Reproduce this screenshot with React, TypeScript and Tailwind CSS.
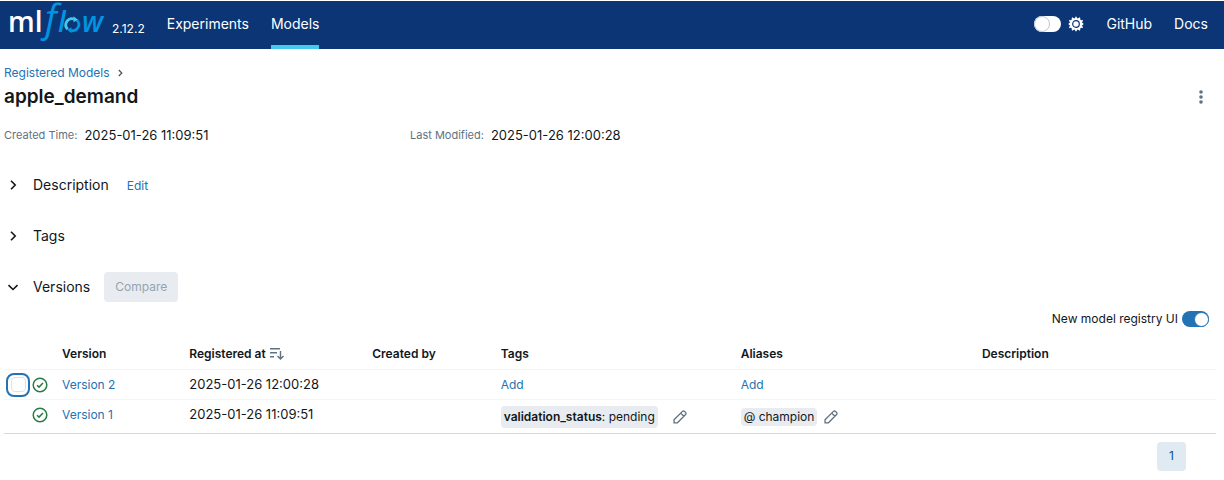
import { useState } from "react";
import type { ReactNode } from "react";

const linkClass = "text-[#2272b4] hover:underline";

function Logo() {
  return (
    <svg width="99" height="48" viewBox="0 0 99 48" role="img" aria-label="mlflow" className="shrink-0 overflow-visible">
      <text x="-1" y="31" fill="#fff" fontFamily="'Open Sans', sans-serif" fontSize="28" fontWeight="600">ml</text>
      <text x="36" y="31" fill="#0194e2" fontFamily="'Open Sans', sans-serif" fontSize="38" fontStyle="italic" fontWeight="500">f</text>
      <text x="49" y="31" fill="#0194e2" fontFamily="'Open Sans', sans-serif" fontSize="28" fontStyle="italic" fontWeight="600">l</text>
      <g fill="none" strokeWidth="2.800">
        <path d="M58.600 28.200A6.200 6.200 0 0 1 65 18" stroke="#43c9ed" />
        <path d="M68 19.200A6.200 6.200 0 0 1 62 29.500" stroke="#0194e2" />
      </g>
      <path d="M64.500 15.200v6l4.500-2.500z" fill="#43c9ed" />
      <path d="M62.500 32.200v-6l-4.500 2.500z" fill="#0194e2" />
      <text x="73" y="31" fill="#0194e2" fontFamily="'Open Sans', sans-serif" fontSize="28" fontStyle="italic" fontWeight="600">w</text>
    </svg>
  );
}

function Gear() {
  return (
    <svg width="16" height="16" viewBox="0 0 16 16" aria-hidden="true">
      <path
        d="M8 .3 9.500 2.600 12 1.300 12.500 3.900 15.200 4.200 14 6.500 15.800 8 14 9.500 15.200 11.800 12.500 12.100 12 14.700 9.500 13.400 8 15.700 6.500 13.400 4 14.700 3.500 12.100.8 11.800 2 9.500.2 8 2 6.500.8 4.200 3.500 3.900 4 1.300 6.500 2.600z"
        fill="#fff"
      />
      <circle cx="8" cy="8" r="3.300" fill="none" stroke="#0b3574" strokeWidth="1.200" />
    </svg>
  );
}

function Chevron({ open }: { open: boolean }) {
  return (
    <svg width="16" height="16" viewBox="0 0 16 16" fill="none" stroke="#11171c" strokeWidth="1.600" aria-hidden="true">
      <path d={open ? "M3.500 6.200 8 10.500 12.500 6.200" : "M6 3.800 10.200 8 6 12.200"} />
    </svg>
  );
}

function Pencil() {
  return (
    <svg width="14" height="14" viewBox="0 0 16 16" fill="none" stroke="#5f7281" strokeWidth="1.500" strokeLinejoin="round" aria-hidden="true">
      <path d="M1.200 14.800v-3.600l9.600-9.600a1.600 1.600 0 0 1 2.300 0l1.300 1.300a1.600 1.600 0 0 1 0 2.300L4.800 14.800zM8.800 3.600l3.600 3.600" />
    </svg>
  );
}

function Ready() {
  return (
    <svg width="16" height="16" viewBox="0 0 16 16" fill="none" stroke="#277c43" strokeWidth="1.500" role="img" aria-label="Ready">
      <circle cx="8" cy="8" r="6.800" />
      <path d="M5 8.200 7 10.100 11 6" />
    </svg>
  );
}

function SortIcon() {
  return (
    <svg width="14" height="14" viewBox="0 0 14 14" fill="none" stroke="#5f7281" strokeWidth="1.400" aria-hidden="true">
      <path d="M0 1.700h10M0 5.700h7M0 9.700h4M10.500 4v8M7.500 9l3 3 3-3" />
    </svg>
  );
}

function Section({ title, open, children }: { title: string; open: boolean; children?: ReactNode }) {
  return (
    <div className="flex h-[51px] items-center">
      <button className="flex items-center gap-3 pl-px text-sm" aria-expanded={open}>
        <Chevron open={open} />
        <span>{title}</span>
      </button>
      {children}
    </div>
  );
}

function EditButton({ label }: { label: string }) {
  return (
    <button aria-label={label} className="flex p-0">
      <Pencil />
    </button>
  );
}

export default function App() {
  const [dark, setDark] = useState(false);
  const [newUi, setNewUi] = useState(true);
  const th = "p-0 pt-[2px] text-left font-semibold";

  return (
    <div className="bg-white pt-px font-['Inter','Liberation_Sans',sans-serif] text-xs text-[#11171c]">
      <header className="flex h-12 items-center bg-[#0b3574] pr-4 pl-[9px] text-sm text-white">
        <a href="#home" className="flex items-end gap-1">
          <Logo />
          <span className="pb-3 text-xs">2.12.2</span>
        </a>
        <nav className="ml-[22px] flex h-full gap-[22px]">
          <a href="#experiments" className="flex items-center border-b-4 border-transparent pt-[2px]">Experiments</a>
          <a href="#models" className="flex items-center border-b-4 border-[#43c9ed] pt-[2px]">Models</a>
        </nav>
        <div className="ml-auto flex items-center gap-[22px] pb-[3px]">
          <div className="flex items-center gap-[7px]">
            <button
              role="switch"
              aria-checked={dark}
              aria-label="Dark mode"
              onClick={() => setDark(!dark)}
              className="flex h-4 w-[27px] items-center rounded-full bg-white"
            >
              <span className="size-4 rounded-full border border-[#b9c7d6] bg-white" />
            </button>
            <Gear />
          </div>
          <a href="#github" className="pt-px">GitHub</a>
          <a href="#docs" className="pt-px">Docs</a>
        </div>
      </header>

      <main className="pr-2 pl-1">
        <nav aria-label="Breadcrumb" className="mt-4 flex h-4 items-center gap-2">
          <a href="#registered-models" className={linkClass}>Registered Models</a>
          <svg width="5" height="8" viewBox="0 0 5 8" fill="none" stroke="#44535f" strokeWidth="1.200" aria-hidden="true">
            <path d="M.8 1 3.800 4 .8 7" />
          </svg>
        </nav>
        <div className="flex h-8 items-center justify-between pr-[13px]">
          <h1 className="text-[19px] font-semibold">apple_demand</h1>
          <button aria-label="More actions">
            <svg width="4" height="14" viewBox="0 0 4 14" fill="#5f7281" aria-hidden="true">
              <circle cx="2" cy="2" r="1.800" />
              <circle cx="2" cy="7" r="1.800" />
              <circle cx="2" cy="12" r="1.800" />
            </svg>
          </button>
        </div>

        <dl className="mt-[14px] grid h-4 grid-cols-[33.500%_1fr] items-center">
          <div className="flex items-center gap-[7px]">
            <dt className="text-[11px] text-[#5f7281]">Created Time:</dt>
            <dd className="text-[13px]">2025-01-26 11:09:51</dd>
          </div>
          <div className="flex items-center gap-[7px]">
            <dt className="text-[11px] text-[#5f7281]">Last Modified:</dt>
            <dd className="text-[13px]">2025-01-26 12:00:28</dd>
          </div>
        </dl>

        <div className="mt-4">
          <Section title="Description" open={false}>
            <button className={`ml-[18px] pt-[2px] ${linkClass}`}>Edit</button>
          </Section>
          <Section title="Tags" open={false} />
          <Section title="Versions" open>
            <button disabled className="ml-[14px] h-[30px] rounded bg-[#e8ecf0] px-[11px] text-[#92a4b3]">
              Compare
            </button>
          </Section>
        </div>

        <div className="flex h-[14px] items-center justify-end gap-1 pr-[7px]">
          <span id="new-ui">New model registry UI</span>
          <button
            role="switch"
            aria-checked={newUi}
            aria-labelledby="new-ui"
            onClick={() => setNewUi(!newUi)}
            className="flex h-4 w-[27px] items-center justify-end rounded-full bg-[#2272b4]"
          >
            <span className="size-[15px] rounded-full border border-[#2272b4] bg-white" />
          </button>
        </div>

        <table className="mt-3 w-full table-fixed border-collapse border-b border-[#d1d9e1]">
          <thead>
            <tr className="h-[31px] border-b border-[#f3f5f7]">
              <th className="w-[58px] p-0" aria-label="Select" />
              <th className={`w-[10.5%] ${th}`}>Version</th>
              <th className={`w-[15.1%] ${th}`}>
                <button className="flex items-center gap-1">
                  Registered at <SortIcon />
                </button>
              </th>
              <th className={`w-[10.6%] ${th}`}>Created by</th>
              <th className={`w-[19.8%] ${th}`}>Tags</th>
              <th className={`w-[19.9%] ${th}`}>Aliases</th>
              <th className={th}>Description</th>
            </tr>
          </thead>
          <tbody>
            <tr className="h-[30px] border-b border-[#f3f5f7]">
              <td className="p-0">
                <div className="flex items-center gap-[2px] pt-px pl-[2px]">
                  <span className="flex size-6 items-center justify-center rounded-lg border-2 border-[#2272b4]">
                    <input
                      type="checkbox"
                      aria-label="Select Version 2"
                      className="size-[15px] appearance-none rounded border border-[#dbe3ea] bg-white"
                    />
                  </span>
                  <Ready />
                </div>
              </td>
              <td className="p-0 pt-[2px]"><a href="#version-2" className={linkClass}>Version 2</a></td>
              <td className="p-0 pt-[2px] text-[13px]">2025-01-26 12:00:28</td>
              <td className="p-0" />
              <td className="p-0 pt-[2px]"><button className={linkClass}>Add</button></td>
              <td className="p-0 pt-[2px]"><button className={linkClass}>Add</button></td>
              <td className="p-0" />
            </tr>
            <tr className="h-[34px]">
              <td className="p-0 pb-[2px] pl-7"><Ready /></td>
              <td className="p-0 pb-[2px]"><a href="#version-1" className={linkClass}>Version 1</a></td>
              <td className="p-0 pb-[2px] text-[13px]">2025-01-26 11:09:51</td>
              <td className="p-0" />
              <td className="p-0">
                <div className="flex items-center gap-[15px] pt-px">
                  <span className="rounded bg-[#e8ecf0] px-[3px] py-[3px]">
                    <strong className="font-semibold">validation_status</strong>: pending
                  </span>
                  <EditButton label="Edit tags" />
                </div>
              </td>
              <td className="p-0">
                <div className="flex items-center gap-[7px] pt-px">
                  <span className="rounded bg-[#e8ecf0] px-[3px] py-px">@ champion</span>
                  <EditButton label="Edit aliases" />
                </div>
              </td>
              <td className="p-0" />
            </tr>
          </tbody>
        </table>

        <nav aria-label="Pagination" className="mt-2 flex justify-end pr-[30px]">
          <button aria-current="page" className="size-[29px] rounded bg-[#e0eaf3] text-[#0e538b]">1</button>
        </nav>
      </main>
    </div>
  );
}
